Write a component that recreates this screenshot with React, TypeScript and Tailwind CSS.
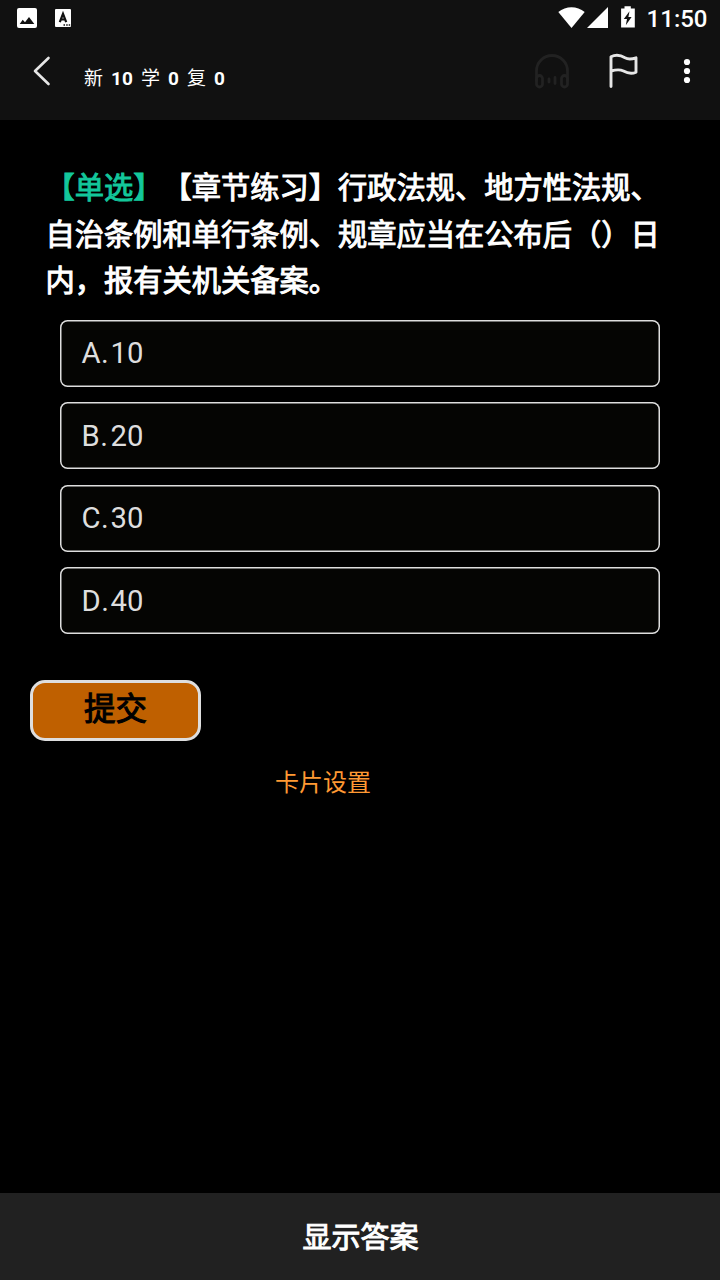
const options = [
  { key: 'A', value: '10' },
  { key: 'B', value: '20' },
  { key: 'C', value: '30' },
  { key: 'D', value: '40' },
];

function StatusBar() {
  return (
    <div className="flex h-9 items-start justify-between">
      <div className="flex gap-[18px] pt-2 pl-[17px]">
        <svg width="20" height="20" viewBox="0 0 20 20">
          <rect width="20" height="20" rx="2" fill="#fff" />
          <path d="M2.700 16l3-4.300 2.300 2.500 4-5.200L17.300 16z" fill="#111" />
        </svg>
        <svg width="16" height="18" viewBox="0 0 16 18" className="mt-px">
          <rect width="16" height="18" rx="1" fill="#fff" />
          <path d="M4.800 13.200L8 4.800l3.200 8.400M6 10.500h4" fill="none" stroke="#111" strokeWidth="2.200" />
          <path d="M8.500 16h1.500M11.200 16h1.500M13.700 16h1.500" stroke="#111" strokeWidth="1.500" />
        </svg>
      </div>
      <div className="flex items-start pr-[12.500px]">
        <svg width="78" height="22" viewBox="558 6 78 22" className="mt-1.5">
          <path d="M558.300 12.100C566 5.700 577 5.700 584.700 12.100L571.500 28z" fill="#fff" />
          <path d="M608 7v21h-21z" fill="#fff" />
          <path d="M624.500 6.300h6.300v2.200h4V27.500h-13.700V8.500h3.400z" fill="#fff" />
          <path d="M629.500 11.300l-5.700 7.700h3.200l-1.200 6.200 5.800-8.200h-3.200z" fill="#111" />
        </svg>
        <div className="mt-[5px] ml-[10.500px] text-2xl leading-7 font-medium text-white">11:50</div>
      </div>
    </div>
  );
}

function Toolbar() {
  return (
    <div className="flex h-[84px] items-start">
      <svg width="20" height="32" viewBox="0 0 20 32" className="mt-[19px] ml-8">
        <path d="M16.500 3L3 16l13.500 13" fill="none" stroke="#e6e6e6" strokeWidth="2.600" strokeLinecap="round" strokeLinejoin="round" />
      </svg>
      <div className="mt-[29px] ml-8 flex text-[19px] leading-7 text-white">
        <span className="w-[27px]">新</span>
        <b className="w-[30px]">10</b>
        <span className="w-[27px]">学</span>
        <b className="w-[19px]">0</b>
        <span className="w-[27px]">复</span>
        <b>0</b>
      </div>
      <svg width="36" height="36" viewBox="0 0 36 36" className="mt-[17px] ml-auto" fill="none" stroke="#222222" strokeWidth="2.800" strokeLinecap="round">
        <path d="M2.500 28V18a15.500 15.500 0 0 1 31 0V28" />
        <rect x="2.500" y="22.500" width="6" height="11.500" rx="3" />
        <rect x="27.500" y="22.500" width="6" height="11.500" rx="3" />
        <path d="M15 26v3M21 24.500v6" />
      </svg>
      <svg width="30" height="36" viewBox="0 0 30 36" className="mt-[17px] mr-px ml-[38px]" fill="none" stroke="#e6e6e6" strokeWidth="2.900" strokeLinecap="round" strokeLinejoin="round">
        <path d="M3 33.500V3.800C9 .8 14 3 17 4.800 20 6.500 25 5.800 28 4.800v14.400C24 21 19 20 15.500 18 11 15.800 7 16.800 3 18.200" />
      </svg>
      <svg width="8" height="26" viewBox="0 0 8 26" className="mt-[22px] mr-[29px] ml-[44px]" fill="#fff">
        <circle cx="4" cy="4" r="3.100" />
        <circle cx="4" cy="13" r="3.100" />
        <circle cx="4" cy="22" r="3.100" />
      </svg>
    </div>
  );
}

export default function App() {
  return (
    <div lang="zh-CN" className="flex h-[1280px] w-[720px] flex-col overflow-hidden bg-black font-[Roboto,'Noto_Sans_CJK_SC',sans-serif]">
      <header className="h-[120px] shrink-0 bg-[#111111]">
        <StatusBar />
        <Toolbar />
      </header>

      <main className="flex-1">
        <h1 className="mt-[45px] ml-[45.500px] w-[630px] text-[29.250px] leading-[46.500px] font-normal text-white [-webkit-text-stroke:1px] [text-spacing-trim:space-all]">
          <span className="text-[#13c79b]">【单选】</span>【章节练习】行政法规、地方性法规、
          <br />
          自治条例和单行条例、规章应当在公布后（）日
          <br />
          内，报有关机关备案。
        </h1>

        <ul className="mt-[15px] ml-[60px] flex w-[600px] flex-col gap-[15.500px]">
          {options.map(({ key, value }) => (
            <li key={key} className="flex h-[67px] items-center rounded-[7.500px] bg-[#050503] pt-[1.500px] pl-[21.500px] text-[29.250px] leading-none text-[#dedede] shadow-[inset_0_0_0_1.500px_#dedede]">
              <span className="w-[29px] whitespace-nowrap">
                {key}
                <span className="ml-[0.500px]">.</span>
              </span>
              <span>{value}</span>
            </li>
          ))}
        </ul>

        <button className="mt-[45.500px] ml-[30px] flex h-[61px] w-[171px] items-start justify-center rounded-[15px] border-3 border-[#dedede] bg-[#bf6000] pt-[4px] text-[31.500px] leading-[46px] font-normal text-black [-webkit-text-stroke:1.100px]">
          提交
        </button>

        <a className="mt-[24px] ml-[275px] block text-2xl leading-9 text-[#ff9933]">卡片设置</a>
      </main>

      <footer className="flex h-[87px] shrink-0 items-center justify-center bg-[#212121] pt-[4px] pl-px text-[29px] font-normal text-white [-webkit-text-stroke:1px]">
        显示答案
      </footer>
    </div>
  );
}
